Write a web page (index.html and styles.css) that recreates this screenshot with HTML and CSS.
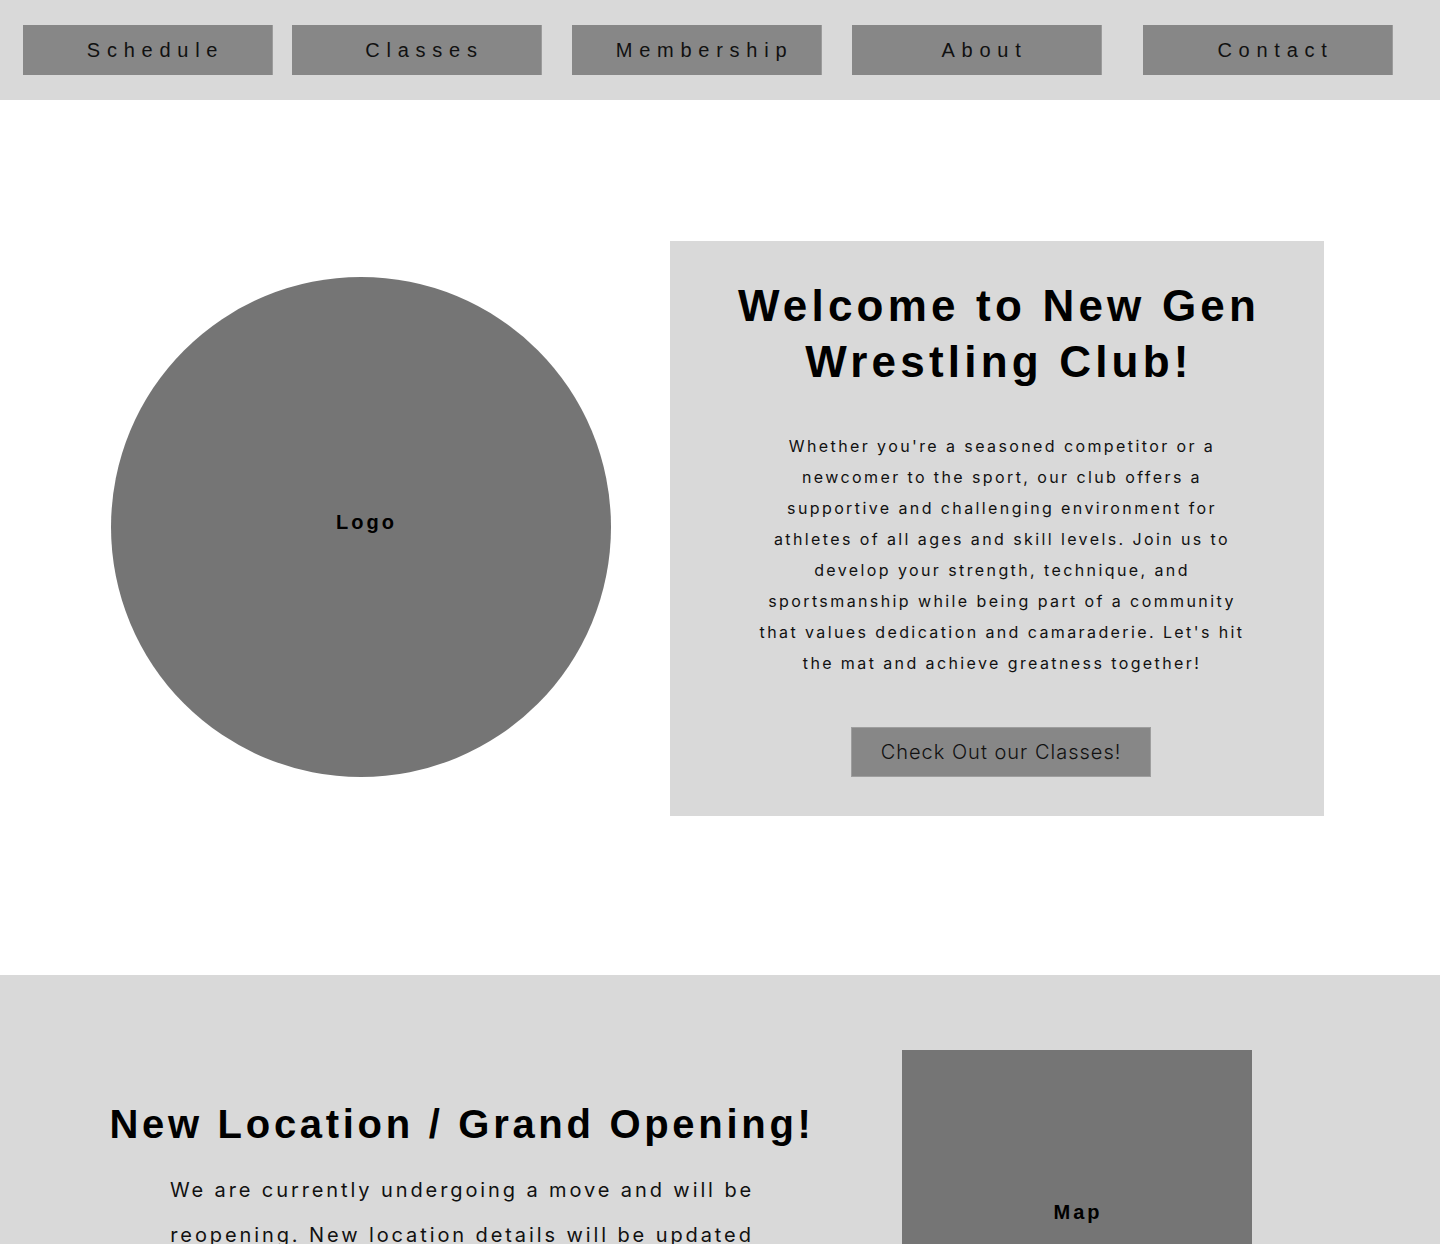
FILE: index.html
```html
<!DOCTYPE html>
<html lang="en">
<head>
<meta charset="utf-8">
<title>New Gen Wrestling Club</title>
<link rel="stylesheet" href="styles.css">
</head>
<body>
<nav class="nav">
  <a class="nav-btn" href="#">Schedule</a>
  <a class="nav-btn nav-btn--classes" href="#">Classes</a>
  <a class="nav-btn nav-btn--membership" href="#">Membership</a>
  <a class="nav-btn nav-btn--about" href="#">About</a>
  <a class="nav-btn nav-btn--contact" href="#">Contact</a>
</nav>

<section class="hero">
  <div class="logo"><span class="label label--logo">Logo</span></div>
  <div class="welcome">
    <h1 class="welcome-title">Welcome to New Gen Wrestling Club!</h1>
    <p class="welcome-text">Whether you're a seasoned competitor or a newcomer to the sport, our club offers a supportive and challenging environment for athletes of all ages and skill levels. Join us to develop your strength, technique, and sportsmanship while being part of a community that values dedication and camaraderie. Let's hit the mat and achieve greatness together!</p>
    <a class="cta" href="#">Check Out our Classes!</a>
  </div>
</section>

<section class="location">
  <div class="location-info">
    <h2 class="location-title">New Location / Grand Opening!</h2>
    <p class="location-text">We are currently undergoing a move and will be reopening. New location details will be updated here soon. Stay tuned for our grand opening!</p>
  </div>
  <div class="map"><span class="label label--map">Map</span></div>
</section>
</body>
</html>
```

FILE: styles.css
```css
* {
  box-sizing: border-box;
}

body {
  margin: 0;
  background: #ffffff;
  color: #000000;
  font-family: "Liberation Sans", Arial, sans-serif;
}

/* Navigation */
.nav {
  display: flex;
  align-items: center;
  height: 100px;
  padding-left: 23px;
  background: #d9d9d9;
}

.nav-btn {
  display: block;
  width: 250px;
  height: 50px;
  padding-left: 16px;
  line-height: 50px;
  text-align: center;
  background: #878787;
  border-right: 1px solid #9c9c9c;
  color: #111111;
  text-decoration: none;
  font-size: 20px;
  letter-spacing: 6.75px;
}

.nav-btn--classes { margin-left: 19px; }
.nav-btn--membership { margin-left: 30px; }
.nav-btn--about { margin-left: 30px; }
.nav-btn--contact { margin-left: 41px; }

/* Hero */
.hero {
  display: flex;
  align-items: flex-start;
  height: 875px;
  padding: 141px 0 0 111px;
  gap: 59px;
}

.logo {
  display: flex;
  align-items: center;
  justify-content: center;
  width: 500px;
  height: 500px;
  margin-top: 36px;
  border-radius: 50%;
  background: #757575;
  flex: none;
}

.label {
  display: block;
  margin-bottom: 10px;
  font-family: "Liberation Sans", Arial, sans-serif;
  font-weight: 700;
  font-size: 20px;
  letter-spacing: 3px;
  color: #000000;
}

.label--logo {
  padding-left: 11px;
}

.label--map {
  padding-left: 2px;
}

.welcome {
  display: flex;
  flex-direction: column;
  align-items: center;
  width: 654px;
  height: 575px;
  padding: 37px 40px 0;
  background: #d9d9d9;
  flex: none;
}

.welcome-title {
  margin: 0;
  width: 560px;
  padding-left: 4px;
  text-align: center;
  font-size: 44px;
  line-height: 56px;
  font-weight: 700;
  letter-spacing: 4.2px;
}

.welcome-text {
  margin: 41px 0 0;
  width: 500px;
  padding-left: 10px;
  text-align: center;
  font-family: "Inter", sans-serif;
  font-size: 16px;
  line-height: 31px;
  letter-spacing: 2.4px;
  color: #111111;
}

.cta {
  display: block;
  margin: 48px 0 0 8px;
  width: 300px;
  height: 50px;
  line-height: 48px;
  text-align: center;
  background: #878787;
  border: 1px solid #9e9e9e;
  color: #111111;
  text-decoration: none;
  font-family: "Inter", sans-serif;
  font-weight: 300;
  font-size: 20px;
  letter-spacing: 1px;
}

/* Location */
.location {
  display: flex;
  align-items: flex-start;
  gap: 80px;
  padding: 75px 0 80px 102px;
  background: #d9d9d9;
}

.location-info {
  width: 720px;
  padding-top: 50px;
  text-align: center;
  flex: none;
}

.location-title {
  margin: 0;
  font-size: 40px;
  line-height: 48px;
  font-weight: 700;
  letter-spacing: 3.7px;
}

.location-text {
  margin: 20px auto 0;
  width: 600px;
  font-family: "Inter", sans-serif;
  font-size: 20px;
  line-height: 45px;
  letter-spacing: 2.9px;
  color: #111111;
}

.map {
  display: flex;
  align-items: center;
  justify-content: center;
  width: 350px;
  height: 334px;
  background: #757575;
  flex: none;
}
```
